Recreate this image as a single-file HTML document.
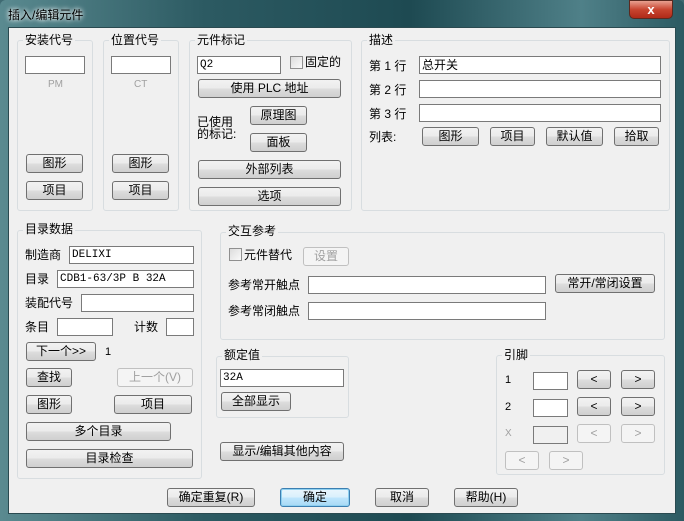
<!DOCTYPE html>
<html><head><meta charset="utf-8"><style>
*{box-sizing:border-box;margin:0;padding:0}
body{width:684px;height:521px;overflow:hidden;position:relative;font:12px "Liberation Sans","Noto Sans CJK SC",sans-serif;color:#000;background:#3f6a72}
.frame{position:absolute;left:0;top:0;width:684px;height:521px;border-radius:6px 6px 0 0;background:linear-gradient(90deg,#5a8a90 0%,#2c5a62 30%,#1e4a52 60%,#4f8088 85%,#2c5a62 100%)}
.client{position:absolute;left:8px;top:27px;width:668px;height:487px;background:#f0f0f0;border:1px solid #2a4a50}
.title{position:absolute;left:8px;top:6px;font-size:12px;color:#000;text-shadow:0 0 6px #fff,0 0 4px #fff}
.close{position:absolute;left:629px;top:0;width:44px;height:19px;border-radius:0 0 5px 5px;background:linear-gradient(#e8a090,#c84530 50%,#b02a18);border:1px solid #5a2a20;color:#fff;font-weight:bold;text-align:center;line-height:17px;font-size:13px}
.a{position:absolute}
.g{position:absolute;border:1px solid #d8dde0;border-radius:3px}
.gl{position:absolute;background:#f0f0f0;padding:0 2px;line-height:14px;white-space:nowrap}
.i{position:absolute;background:#fff;border:1px solid #7a7a7a;height:18px;font-family:"Liberation Mono","Noto Sans CJK SC",monospace;font-size:11px;line-height:16px;padding-left:2px;white-space:nowrap}
.b{position:absolute;height:19px;border:1px solid #707070;border-radius:3px;background:linear-gradient(#f2f2f2,#ebebeb 50%,#dddddd 51%,#cfcfcf);text-align:center;line-height:17px;white-space:nowrap}
.d{color:#a0a0a0;border-color:#c0c0c0;background:#f4f4f4}
.t{position:absolute;line-height:14px;white-space:nowrap}
.cb{position:absolute;width:13px;height:13px;border:1px solid #8f8f8f;background:linear-gradient(135deg,#dcdcdc,#fafafa)}
</style></head><body>
<div class="frame"></div>
<div class="title">插入/编辑元件</div>
<div class="close">x</div>
<div class="client"></div>

<!-- 安装代号 -->
<div class="g" style="left:17px;top:40px;width:76px;height:171px"></div>
<div class="gl" style="left:23px;top:33px">安装代号</div>
<div class="i" style="left:25px;top:56px;width:60px"></div>
<div class="t" style="left:48px;top:78px;color:#a0a0a0;font-size:10px">PM</div>
<div class="b" style="left:26px;top:154px;width:57px">图形</div>
<div class="b" style="left:26px;top:181px;width:57px">项目</div>

<!-- 位置代号 -->
<div class="g" style="left:103px;top:40px;width:76px;height:171px"></div>
<div class="gl" style="left:109px;top:33px">位置代号</div>
<div class="i" style="left:111px;top:56px;width:60px"></div>
<div class="t" style="left:134px;top:78px;color:#a0a0a0;font-size:10px">CT</div>
<div class="b" style="left:112px;top:154px;width:57px">图形</div>
<div class="b" style="left:112px;top:181px;width:57px">项目</div>

<!-- 元件标记 -->
<div class="g" style="left:189px;top:40px;width:163px;height:171px"></div>
<div class="gl" style="left:195px;top:33px">元件标记</div>
<div class="i" style="left:197px;top:56px;width:84px">Q2</div>
<div class="cb" style="left:290px;top:56px"></div>
<div class="t" style="left:305px;top:55px">固定的</div>
<div class="b" style="left:198px;top:79px;width:143px">使用 PLC 地址</div>
<div class="t" style="left:197px;top:116px;line-height:12px">已使用<br>的标记:</div>
<div class="b" style="left:250px;top:106px;width:57px">原理图</div>
<div class="b" style="left:250px;top:133px;width:57px">面板</div>
<div class="b" style="left:198px;top:160px;width:143px">外部列表</div>
<div class="b" style="left:198px;top:187px;width:143px">选项</div>

<!-- 描述 -->
<div class="g" style="left:361px;top:40px;width:309px;height:171px"></div>
<div class="gl" style="left:367px;top:33px">描述</div>
<div class="t" style="left:369px;top:59px">第 1 行</div>
<div class="i" style="left:419px;top:56px;width:242px;font-family:'Liberation Sans','Noto Sans CJK SC',sans-serif;font-size:12px">总开关</div>
<div class="t" style="left:369px;top:83px">第 2 行</div>
<div class="i" style="left:419px;top:80px;width:242px"></div>
<div class="t" style="left:369px;top:107px">第 3 行</div>
<div class="i" style="left:419px;top:104px;width:242px"></div>
<div class="t" style="left:369px;top:130px">列表:</div>
<div class="b" style="left:422px;top:127px;width:57px">图形</div>
<div class="b" style="left:490px;top:127px;width:45px">项目</div>
<div class="b" style="left:546px;top:127px;width:57px">默认值</div>
<div class="b" style="left:614px;top:127px;width:45px">拾取</div>

<!-- 目录数据 -->
<div class="g" style="left:17px;top:230px;width:185px;height:249px"></div>
<div class="gl" style="left:23px;top:222px">目录数据</div>
<div class="t" style="left:25px;top:248px">制造商</div>
<div class="i" style="left:69px;top:246px;width:125px">DELIXI</div>
<div class="t" style="left:25px;top:272px">目录</div>
<div class="i" style="left:57px;top:270px;width:137px">CDB1-63/3P B 32A</div>
<div class="t" style="left:25px;top:296px">装配代号</div>
<div class="i" style="left:81px;top:294px;width:113px"></div>
<div class="t" style="left:25px;top:320px">条目</div>
<div class="i" style="left:57px;top:318px;width:56px"></div>
<div class="t" style="left:134px;top:320px">计数</div>
<div class="i" style="left:166px;top:318px;width:28px"></div>
<div class="b" style="left:26px;top:342px;width:70px">下一个&gt;&gt;</div>
<div class="t" style="left:105px;top:345px;font-size:11px">1</div>
<div class="b" style="left:26px;top:368px;width:46px">查找</div>
<div class="b d" style="left:117px;top:368px;width:76px">上一个(V)</div>
<div class="b" style="left:26px;top:395px;width:46px">图形</div>
<div class="b" style="left:114px;top:395px;width:78px">项目</div>
<div class="b" style="left:26px;top:422px;width:145px">多个目录</div>
<div class="b" style="left:26px;top:449px;width:167px">目录检查</div>

<!-- 交互参考 -->
<div class="g" style="left:220px;top:232px;width:445px;height:108px"></div>
<div class="gl" style="left:226px;top:224px">交互参考</div>
<div class="cb" style="left:229px;top:248px"></div>
<div class="t" style="left:244px;top:248px">元件替代</div>
<div class="b d" style="left:303px;top:247px;width:46px">设置</div>
<div class="t" style="left:228px;top:278px">参考常开触点</div>
<div class="i" style="left:308px;top:276px;width:238px"></div>
<div class="b" style="left:555px;top:274px;width:100px">常开/常闭设置</div>
<div class="t" style="left:228px;top:304px">参考常闭触点</div>
<div class="i" style="left:308px;top:302px;width:238px"></div>

<!-- 额定值 -->
<div class="g" style="left:216px;top:356px;width:133px;height:62px"></div>
<div class="gl" style="left:222px;top:348px">额定值</div>
<div class="i" style="left:220px;top:369px;width:124px">32A</div>
<div class="b" style="left:221px;top:392px;width:70px">全部显示</div>
<div class="b" style="left:220px;top:442px;width:124px">显示/编辑其他内容</div>

<!-- 引脚 -->
<div class="g" style="left:496px;top:355px;width:169px;height:120px"></div>
<div class="gl" style="left:502px;top:348px">引脚</div>
<div class="t" style="left:505px;top:373px;font-size:11px">1</div>
<div class="i" style="left:533px;top:372px;width:35px"></div>
<div class="b" style="left:577px;top:370px;width:34px">&lt;</div>
<div class="b" style="left:621px;top:370px;width:34px">&gt;</div>
<div class="t" style="left:505px;top:400px;font-size:11px">2</div>
<div class="i" style="left:533px;top:399px;width:35px"></div>
<div class="b" style="left:577px;top:397px;width:34px">&lt;</div>
<div class="b" style="left:621px;top:397px;width:34px">&gt;</div>
<div class="t" style="left:505px;top:427px;font-size:10px;color:#a0a0a0">X</div>
<div class="i" style="left:533px;top:426px;width:35px;background:#f0f0f0"></div>
<div class="b d" style="left:577px;top:424px;width:34px">&lt;</div>
<div class="b d" style="left:621px;top:424px;width:34px">&gt;</div>
<div class="b d" style="left:505px;top:451px;width:34px">&lt;</div>
<div class="b d" style="left:549px;top:451px;width:34px">&gt;</div>

<!-- bottom -->
<div class="b" style="left:167px;top:488px;width:88px">确定重复(R)</div>
<div class="b" style="left:280px;top:488px;width:70px;border-color:#3c7fb1;box-shadow:inset 0 0 0 1px #8ed0f0;background:linear-gradient(#eaf6fd,#d9f0fc 50%,#bee6fd 51%,#a7d9f5)">确定</div>
<div class="b" style="left:375px;top:488px;width:54px">取消</div>
<div class="b" style="left:454px;top:488px;width:64px">帮助(H)</div>
</body></html>
